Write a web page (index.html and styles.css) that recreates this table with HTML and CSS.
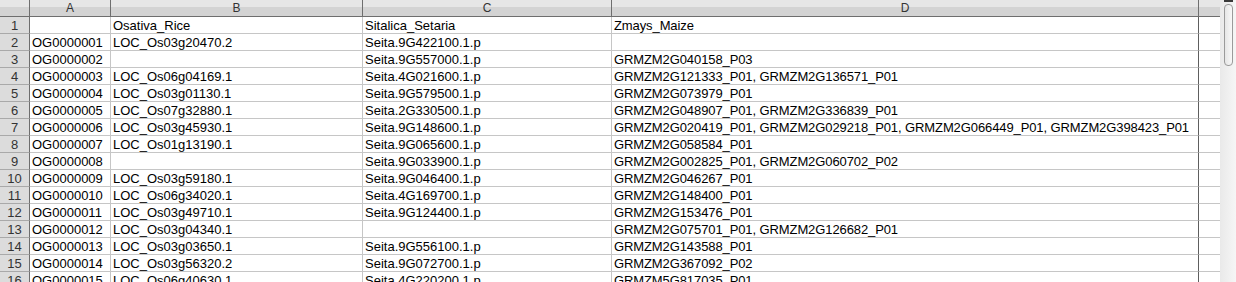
FILE: index.html
```html
<!DOCTYPE html>
<html>
<head>
<meta charset="utf-8">
<link rel="stylesheet" href="styles.css">
</head>
<body>
<div class="window">
  <div class="sheet">
    <div class="corner"></div>
    <div class="colhead">A</div>
    <div class="colhead">B</div>
    <div class="colhead">C</div>
    <div class="colhead colhead-d">D</div>
    <div class="colhead colhead-e"></div>

    <div class="rowhead">1</div><div class="cell"></div><div class="cell">Osativa_Rice</div><div class="cell">Sitalica_Setaria</div><div class="cell cell-d">Zmays_Maize</div><div class="cell cell-e"></div>
    <div class="rowhead">2</div><div class="cell">OG0000001</div><div class="cell">LOC_Os03g20470.2</div><div class="cell">Seita.9G422100.1.p</div><div class="cell cell-d"></div><div class="cell cell-e"></div>
    <div class="rowhead">3</div><div class="cell">OG0000002</div><div class="cell"></div><div class="cell">Seita.9G557000.1.p</div><div class="cell cell-d">GRMZM2G040158_P03</div><div class="cell cell-e"></div>
    <div class="rowhead">4</div><div class="cell">OG0000003</div><div class="cell">LOC_Os06g04169.1</div><div class="cell">Seita.4G021600.1.p</div><div class="cell cell-d">GRMZM2G121333_P01, GRMZM2G136571_P01</div><div class="cell cell-e"></div>
    <div class="rowhead">5</div><div class="cell">OG0000004</div><div class="cell">LOC_Os03g01130.1</div><div class="cell">Seita.9G579500.1.p</div><div class="cell cell-d">GRMZM2G073979_P01</div><div class="cell cell-e"></div>
    <div class="rowhead">6</div><div class="cell">OG0000005</div><div class="cell">LOC_Os07g32880.1</div><div class="cell">Seita.2G330500.1.p</div><div class="cell cell-d">GRMZM2G048907_P01, GRMZM2G336839_P01</div><div class="cell cell-e"></div>
    <div class="rowhead">7</div><div class="cell">OG0000006</div><div class="cell">LOC_Os03g45930.1</div><div class="cell">Seita.9G148600.1.p</div><div class="cell cell-d">GRMZM2G020419_P01, GRMZM2G029218_P01, GRMZM2G066449_P01, GRMZM2G398423_P01</div><div class="cell cell-e"></div>
    <div class="rowhead">8</div><div class="cell">OG0000007</div><div class="cell">LOC_Os01g13190.1</div><div class="cell">Seita.9G065600.1.p</div><div class="cell cell-d">GRMZM2G058584_P01</div><div class="cell cell-e"></div>
    <div class="rowhead">9</div><div class="cell">OG0000008</div><div class="cell"></div><div class="cell">Seita.9G033900.1.p</div><div class="cell cell-d">GRMZM2G002825_P01, GRMZM2G060702_P02</div><div class="cell cell-e"></div>
    <div class="rowhead">10</div><div class="cell">OG0000009</div><div class="cell">LOC_Os03g59180.1</div><div class="cell">Seita.9G046400.1.p</div><div class="cell cell-d">GRMZM2G046267_P01</div><div class="cell cell-e"></div>
    <div class="rowhead">11</div><div class="cell">OG0000010</div><div class="cell">LOC_Os06g34020.1</div><div class="cell">Seita.4G169700.1.p</div><div class="cell cell-d">GRMZM2G148400_P01</div><div class="cell cell-e"></div>
    <div class="rowhead">12</div><div class="cell">OG0000011</div><div class="cell">LOC_Os03g49710.1</div><div class="cell">Seita.9G124400.1.p</div><div class="cell cell-d">GRMZM2G153476_P01</div><div class="cell cell-e"></div>
    <div class="rowhead">13</div><div class="cell">OG0000012</div><div class="cell">LOC_Os03g04340.1</div><div class="cell"></div><div class="cell cell-d">GRMZM2G075701_P01, GRMZM2G126682_P01</div><div class="cell cell-e"></div>
    <div class="rowhead">14</div><div class="cell">OG0000013</div><div class="cell">LOC_Os03g03650.1</div><div class="cell">Seita.9G556100.1.p</div><div class="cell cell-d">GRMZM2G143588_P01</div><div class="cell cell-e"></div>
    <div class="rowhead">15</div><div class="cell">OG0000014</div><div class="cell">LOC_Os03g56320.2</div><div class="cell">Seita.9G072700.1.p</div><div class="cell cell-d">GRMZM2G367092_P02</div><div class="cell cell-e"></div>
    <div class="rowhead">16</div><div class="cell">OG0000015</div><div class="cell">LOC_Os06g40630.1</div><div class="cell">Seita.4G220200.1.p</div><div class="cell cell-d">GRMZM5G817035_P01</div><div class="cell cell-e"></div>
  </div>
  <div class="scrollbar">
    <div class="scroll-cap"></div>
    <div class="scroll-thumb"></div>
  </div>
</div>
</body>
</html>
```
FILE: styles.css
```css
html, body {
  margin: 0;
  padding: 0;
  background: #ffffff;
}

.window {
  display: flex;
  width: 1236px;
  height: 282px;
  overflow: hidden;
}

.sheet {
  display: grid;
  grid-template-columns: 30px 81px 252px 249px 587px 21px;
  grid-auto-rows: 17px;
  width: 1220px;
  font-family: "Liberation Sans", Arial, sans-serif;
  font-size: 13px;
  color: #000000;
}

.corner {
  border-right: 1px solid #6e6e6e;
  border-bottom: 1px solid #6e6e6e;
  background: linear-gradient(to bottom, #e6e6e6 0 7px, #d3d3d3 7px);
}

.colhead {
  border-right: 1px solid #6e6e6e;
  border-bottom: 1px solid #6e6e6e;
  background: linear-gradient(to bottom, #e6e6e6 0 7px, #d3d3d3 7px);
  color: #333333;
  font-size: 12px;
  line-height: 16px;
  text-align: center;
}

.colhead-e {
  border-right: none;
}

.rowhead {
  border-right: 1px solid #6e6e6e;
  border-bottom: 1px solid #a9a9a9;
  background: #dcdcdc;
  color: #333333;
  line-height: 17px;
  text-align: center;
}

.cell {
  border-right: 1px solid #c6c6c6;
  border-bottom: 1px solid #c6c6c6;
  padding: 0 2px;
  line-height: 17px;
  white-space: nowrap;
  overflow: hidden;
}

.cell-d {
  border-right-color: #5e5e5e;
  letter-spacing: -0.1px;
}

.cell-e {
  border-right: none;
}

.scrollbar {
  width: 16px;
  height: 282px;
  background: linear-gradient(to right, #e9e9e9, #f6f6f6);
  display: flex;
  flex-direction: column;
  align-items: center;
}

.scroll-cap {
  width: 9px;
  height: 2px;
  background: #3a3a3a;
}

.scroll-thumb {
  width: 7px;
  height: 60px;
  margin-top: 2px;
  border: 1px solid #9a9a9a;
  border-radius: 4px;
  background: linear-gradient(to right, #e6e6e6, #f8f8f8);
}
```
